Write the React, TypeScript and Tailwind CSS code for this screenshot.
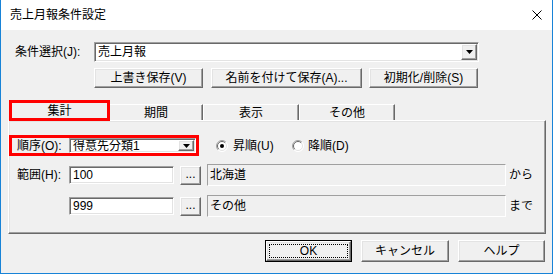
import React from "react";

const raised =
  "border border-t-white border-l-white border-r-[#696969] border-b-[#696969] shadow-[inset_-1px_-1px_0_#a0a0a0,inset_1px_1px_0_#e3e3e3] bg-[#f0f0f0]";
const sunken =
  "border border-t-[#a0a0a0] border-l-[#a0a0a0] border-r-white border-b-white shadow-[inset_1px_1px_0_#696969,inset_-1px_-1px_0_#e3e3e3] bg-white";
const staticEdge =
  "border border-t-[#a0a0a0] border-l-[#a0a0a0] border-r-white border-b-white bg-[#f0f0f0]";

function DropArrow({ className = "" }: { className?: string }) {
  return (
    <div className={`${raised} flex items-center justify-center shrink-0 ${className}`}>
      <svg width="7" height="4" viewBox="0 0 7 4">
        <path d="M0 0 H7 L3.5 4 Z" fill="#000" />
      </svg>
    </div>
  );
}

function Combo({ value, className = "" }: { value: string; className?: string }) {
  return (
    <div className={`${sunken} flex items-stretch p-[1px] ${className}`}>
      <div className="flex-1 flex items-center pl-[2px] truncate">{value}</div>
      <DropArrow className="w-[16px]" />
    </div>
  );
}

function Button({ label, className = "" }: { label: string; className?: string }) {
  return (
    <div className={`${raised} flex items-center justify-center shrink-0 ${className}`}>
      {label}
    </div>
  );
}

function Radio({ checked }: { checked: boolean }) {
  return (
    <svg width="12" height="12" viewBox="0 0 12 12" className="shrink-0">
      <circle cx="6" cy="6" r="5.5" fill="#fff" />
      <path d="M9.9 2.1 A5.5 5.5 0 0 0 2.1 9.9" stroke="#a0a0a0" strokeWidth="1" fill="none" />
      <path d="M2.1 9.9 A5.5 5.5 0 0 0 9.9 2.1" stroke="#ffffff" strokeWidth="1" fill="none" />
      <path d="M9.2 2.8 A4.5 4.5 0 0 0 2.8 9.2" stroke="#696969" strokeWidth="1" fill="none" />
      <path d="M2.8 9.2 A4.5 4.5 0 0 0 9.2 2.8" stroke="#e3e3e3" strokeWidth="1" fill="none" />
      {checked && <circle cx="6" cy="6" r="2" fill="#000" />}
    </svg>
  );
}

function RangeRow({ label, from, name, suffix, className = "" }: { label: string; from: string; name: string; suffix: string; className?: string }) {
  return (
    <div className={`flex items-center h-[22px] ${className}`}>
      <div className="w-[60px] pl-[8px]">{label}</div>
      <div className={`${sunken} w-[105px] h-[18px] flex items-center pl-[3px]`}>{from}</div>
      <Button label="..." className="w-[21px] h-[19px] ml-[6px] pb-[3px]" />
      <div className={`${staticEdge} w-[299px] h-[22px] ml-[6px] flex items-center pl-[2px]`}>{name}</div>
      <div className="ml-[3px]">{suffix}</div>
    </div>
  );
}

export default function App() {
  return (
    <div className="w-[553px] h-[274px] flex flex-col border-x border-b border-[#1883d7] bg-[#f0f0f0] text-[12px] leading-none text-black font-['Liberation_Sans','Noto_Sans_CJK_JP',sans-serif]">
      <div className="h-[30px] bg-white flex items-center pl-[9px] pr-[10px] shrink-0">
        <span>売上月報条件設定</span>
        <svg width="10" height="10" viewBox="0 0 10 10" className="ml-auto">
          <path d="M0.5 0.5 L9.5 9.5 M9.5 0.5 L0.5 9.5" stroke="#000" strokeWidth="1" />
        </svg>
      </div>

      <div className="flex items-center mt-[12px] h-[20px]">
        <div className="w-[93px] pl-[14px]">条件選択(J):</div>
        <Combo value="売上月報" className="w-[385px] h-[20px]" />
      </div>

      <div className="flex mt-[6px] pl-[93px] h-[20px]">
        <Button label="上書き保存(V)" className="w-[109px]" />
        <Button label="名前を付けて保存(A)..." className="w-[151px] ml-[8px]" />
        <Button label="初期化/削除(S)" className="w-[109px] ml-[7px]" />
      </div>

      <div className="flex items-end mt-[12px] h-[20px] pl-[8px]">
        <div className="relative z-10 w-[101px] h-[21px] mb-[-1px] border-[3px] border-[#ff0000] bg-[#f0f0f0] flex items-center justify-center">
          集計
        </div>
        <div className="w-[93px] h-[16px] border-t border-t-white border-r border-r-[#696969] shadow-[inset_-1px_0_0_#a0a0a0] flex items-center justify-center pt-[1px]">
          期間
        </div>
        <div className="w-[96px] h-[16px] border-t border-t-white border-l border-l-white border-r border-r-[#696969] shadow-[inset_-1px_0_0_#a0a0a0] flex items-center justify-center pt-[1px]">
          表示
        </div>
        <div className="w-[96px] h-[16px] border-t border-t-white border-l border-l-white border-r border-r-[#696969] shadow-[inset_-1px_0_0_#a0a0a0] flex items-center justify-center pt-[1px]">
          その他
        </div>
      </div>

      <div className={`${raised} ml-[7px] w-[538px] h-[114px] flex flex-col`}>
        <div className="flex items-center mt-[14px]">
          <div className="w-[190px] h-[21px] border-[3px] border-[#ff0000] flex items-center">
            <div className="w-[57px] pl-[5px]">順序(O):</div>
            <Combo value="得意先分類1" className="flex-1 h-[15px]" />
          </div>
          <div className="flex items-center ml-[17px] w-[76px]">
            <Radio checked />
            <span className="ml-[5px]">昇順(U)</span>
          </div>
          <div className="flex items-center">
            <Radio checked={false} />
            <span className="ml-[4px]">降順(D)</span>
          </div>
        </div>

        <RangeRow label="範囲(H):" from="100" name="北海道" suffix="から" className="mt-[8px]" />
        <RangeRow label="" from="999" name="その他" suffix="まで" className="mt-[9px]" />
      </div>

      <div className="flex justify-end gap-[9px] pr-[7px] mt-[6px] h-[22px]">
        <div className="w-[87px] h-[22px] border border-black">
          <div className={`${raised} w-full h-full p-[2px]`}>
            <div className="w-full h-full border border-dotted border-black flex items-center justify-center">OK</div>
          </div>
        </div>
        <Button label="キャンセル" className="w-[88px] h-[22px]" />
        <Button label="ヘルプ" className="w-[87px] h-[22px]" />
      </div>
    </div>
  );
}
